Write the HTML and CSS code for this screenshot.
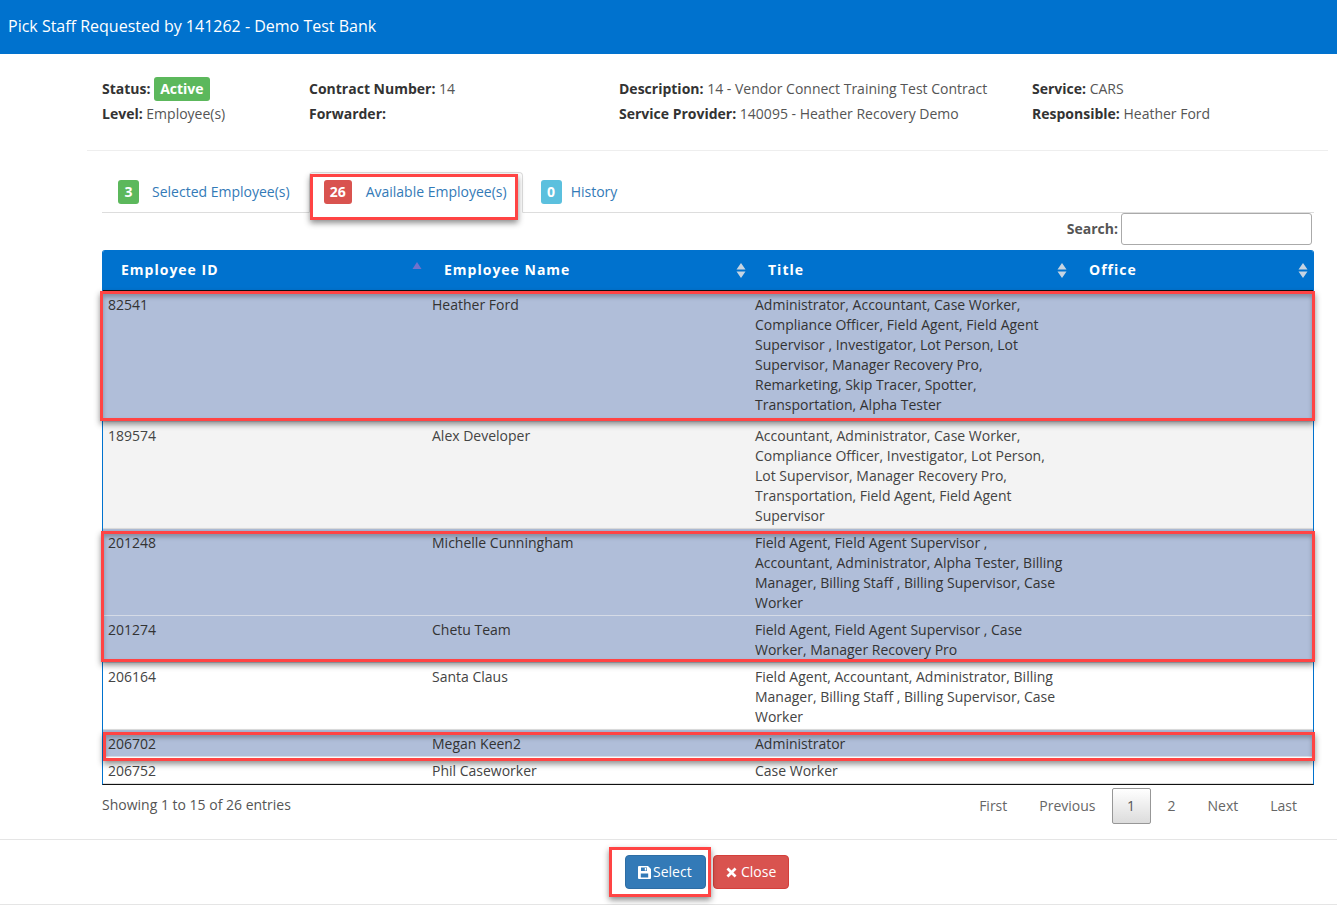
FILE: index.html
```html
<!DOCTYPE html>
<html lang="en">
<head>
<meta charset="utf-8">
<title>Pick Staff</title>
<link rel="stylesheet" href="styles.css">
</head>
<body>
<header class="topbar">Pick Staff Requested by 141262 - Demo Test Bank</header>
<main class="content">
  <section class="summary">
    <div><b>Status:</b> <span class="label label-active">Active</span></div>
    <div><b>Contract Number:</b> 14</div>
    <div><b>Description:</b> 14 - Vendor Connect Training Test Contract</div>
    <div><b>Service:</b> CARS</div>
    <div><b>Level:</b> Employee(s)</div>
    <div><b>Forwarder:</b></div>
    <div><b>Service Provider:</b> 140095 - Heather Recovery Demo</div>
    <div><b>Responsible:</b> Heather Ford</div>
  </section>
  <section class="panel">
    <nav class="tabs">
      <a class="tab tab-selected"><span class="badge badge-green">3</span>Selected Employee(s)</a>
      <a class="tab tab-active"><span class="badge badge-red">26</span>Available Employee(s)<span class="mark mark-tab"></span></a>
      <a class="tab tab-history"><span class="badge badge-blue">0</span>History</a>
    </nav>
    <div class="search"><label for="q">Search:</label><input id="q" type="text"></div>
    <div class="table-area">
      <div class="table-clip">
        <table class="grid">
          <colgroup><col class="c1"><col class="c2"><col class="c3"><col class="c4"></colgroup>
          <thead>
            <tr>
              <th><div class="th-in">Employee ID<svg class="sort sort-up" width="10" height="15" viewBox="0 0 10 15"><path class="sort-on" d="M5 0 9.500 7H.5z"/></svg></div></th>
              <th><div class="th-in">Employee Name<svg class="sort" width="10" height="15" viewBox="0 0 10 15"><path class="sort-off" d="M5 0 9.500 6.500H.5zM5 15 .5 8.500h9z"/></svg></div></th>
              <th><div class="th-in">Title<svg class="sort" width="10" height="15" viewBox="0 0 10 15"><path class="sort-off" d="M5 0 9.500 6.500H.5zM5 15 .5 8.500h9z"/></svg></div></th>
              <th><div class="th-in">Office<svg class="sort" width="10" height="15" viewBox="0 0 10 15"><path class="sort-off" d="M5 0 9.500 6.500H.5zM5 15 .5 8.500h9z"/></svg></div></th>
            </tr>
          </thead>
          <tbody>
            <tr class="sel first"><td>82541</td><td>Heather Ford</td><td>Administrator, Accountant, Case Worker, Compliance Officer, Field Agent, Field Agent Supervisor , Investigator, Lot Person, Lot Supervisor, Manager Recovery Pro, Remarketing, Skip Tracer, Spotter, Transportation, Alpha Tester</td><td></td></tr>
            <tr class="odd"><td>189574</td><td>Alex Developer</td><td>Accountant, Administrator, Case Worker, Compliance Officer, Investigator, Lot Person, Lot Supervisor, Manager Recovery Pro, Transportation, Field Agent, Field Agent Supervisor</td><td></td></tr>
            <tr class="sel"><td>201248</td><td>Michelle Cunningham</td><td>Field Agent, Field Agent Supervisor , Accountant, Administrator, Alpha Tester, Billing Manager, Billing Staff , Billing Supervisor, Case Worker</td><td></td></tr>
            <tr class="sel"><td>201274</td><td>Chetu Team</td><td>Field Agent, Field Agent Supervisor , Case Worker, Manager Recovery Pro</td><td></td></tr>
            <tr><td>206164</td><td>Santa Claus</td><td>Field Agent, Accountant, Administrator, Billing Manager, Billing Staff , Billing Supervisor, Case Worker</td><td></td></tr>
            <tr class="sel"><td>206702</td><td>Megan Keen2</td><td>Administrator</td><td></td></tr>
            <tr><td>206752</td><td>Phil Caseworker</td><td>Case Worker</td><td></td></tr>
          </tbody>
        </table>
      </div>
      <span class="mark mark-r1"></span>
      <span class="mark mark-r2"></span>
      <span class="mark mark-r3"></span>
    </div>
    <div class="table-foot">
      <div class="info">Showing 1 to 15 of 26 entries</div>
      <div class="pager">
        <a>First</a><a>Previous</a><a class="current">1</a><a>2</a><a>Next</a><a>Last</a>
      </div>
    </div>
  </section>
</main>
<footer class="actions">
  <div class="btn-holder">
    <button class="btn btn-primary" type="button"><svg class="ico" width="13" height="13" viewBox="0 0 13 13"><path fill-rule="evenodd" d="M1 0h9l3 3v9a1 1 0 0 1-1 1H1a1 1 0 0 1-1-1V1a1 1 0 0 1 1-1zM3 1.500V5h6V1.500zM6.800 2H8.300V4.500H6.800zM2.800 7.500V11.500H10.200V7.500z"/></svg>Select</button>
    <span class="mark mark-btn"></span>
  </div>
  <button class="btn btn-danger" type="button"><svg class="ico" width="11" height="11" viewBox="0 0 11 11"><path d="M2.400.5 5.500 3.600 8.600.5 10.500 2.400 7.400 5.500 10.500 8.600 8.600 10.500 5.500 7.400 2.400 10.500.5 8.600 3.600 5.500.5 2.400z"/></svg>Close</button>
</footer>
</body>
</html>
```
FILE: styles.css
```css
* { box-sizing: border-box; }
html, body { margin: 0; height: 905px; overflow: hidden; }
body { font-family: "Open Sans", sans-serif; font-size: 14px; line-height: 20px; color: #333; background: #fff; }

.topbar { height: 54px; background: #0072ce; color: #fff; font-size: 16px; line-height: 52px; padding-left: 8px; }

.content { margin: 0 9px 0 87px; }
.summary { display: grid; grid-template-columns: 207px 310px 413px 1fr; grid-auto-rows: 25px; align-items: center; padding: 22px 0 24px 15px; border-bottom: 1px solid #eee; height: 97px; color: #555; }
.summary b { color: #333; font-weight: 700; }
.label { display: inline-block; height: 24px; line-height: 24px; padding: 0 6px; border-radius: 3px; color: #fff; font-weight: 700; vertical-align: baseline; }
.label-active { background: #5cb85c; }

.panel { padding: 21px 14px 0 15px; }
.tabs { display: flex; height: 41px; border-bottom: 1px solid #ddd; }
.tab { position: relative; display: flex; align-items: center; height: 41px; padding: 0 16px 2px; color: #337ab7; margin-right: 2px; border: 1px solid transparent; border-radius: 4px 4px 0 0; }
.tab-selected { padding-left: 15px; }
.tab-selected .badge { margin-right: 13px; }
.tab-active { border-color: #ddd; border-bottom-color: #fff; padding: 0 15px 2px 14px; background: #fff; }
.tab-active .badge { margin-right: 14px; }
.tab-history { padding-left: 15px; }
.tab-history .badge { margin-right: 9px; }
.badge { display: inline-block; min-width: 21px; height: 24px; line-height: 24px; text-align: center; padding: 0 6px; border-radius: 3px; color: #fff; font-weight: 700; }
.badge-green { background: #5cb85c; }
.badge-red { background: #d9534f; width: 28px; }
.badge-blue { background: #5bc0de; }

.search { display: flex; justify-content: flex-end; align-items: center; height: 32px; padding-right: 2px; margin-bottom: 5px; color: #555; font-weight: 700; }
.search label { margin-right: 3px; }
.search input { width: 191px; height: 32px; border: 1px solid #aaa; border-radius: 3px; background: #fff; padding: 0 6px; }

.table-area { position: relative; }
.table-clip { height: 535px; overflow: hidden; border-left: 1px solid #0072ce; border-right: 1px solid #0072ce; border-bottom: 1px solid #111; border-radius: 3px 3px 0 0; }
.grid { width: 1210px; table-layout: fixed; border-collapse: separate; border-spacing: 0; }
.c1 { width: 324px; } .c2 { width: 323px; } .c3 { width: 321px; } .c4 { width: 242px; }
.grid th { height: 41px; padding: 0; background: #0072ce; color: #fff; border-bottom: 1px solid #111; font-weight: 700; letter-spacing: 1px; text-align: left; }
.th-in { display: flex; justify-content: space-between; align-items: center; padding: 0 4px 0 18px; }
th:nth-child(2) .th-in { padding-left: 17px; }
th:first-child .th-in, th:last-child .th-in { padding-right: 5px; }
.sort-off { fill: #c6d4e2; }
.sort-on { fill: #7272cc; }
.sort { flex: none; }
.sort-up { margin-top: -2px; }
.grid td { vertical-align: top; padding: 4px 6px 2px 5px; border-bottom: 1px solid #ddd; color: #444; }
.grid tr.first td { padding-bottom: 6px; }
.grid tr.sel td { background: #b0bed9; border-bottom-color: #d5dbe6; color: #333; }
.grid tr.odd td { background: #f3f3f3; }

.mark { position: absolute; border: 3px solid #ff4444; box-shadow: 0 3px 6px rgba(0,0,0,.45), inset 0 3px 4px rgba(0,0,0,.25); pointer-events: none; }
.mark-tab { left: 0; top: 1px; width: 208px; height: 46px; box-shadow: 0 3px 6px rgba(0,0,0,.45); }
.mark-r1 { left: -2px; top: 41px; width: 1215px; height: 130px; }
.mark-r2 { left: -1px; top: 281px; width: 1214px; height: 131px; }
.mark-r3 { left: 1px; top: 482px; width: 1212px; height: 29px; }
.mark-btn { left: -16px; top: -8px; width: 102px; height: 50px; box-shadow: 0 3px 6px rgba(0,0,0,.45); }

.table-foot { display: flex; justify-content: space-between; }
.info { padding-top: 10px; color: #555; }
.pager { display: flex; padding: 3px 2px 0 0; }
.pager a { height: 36px; line-height: 34px; padding: 0 14px; margin-left: 2px; color: #666; border: 1px solid transparent; border-radius: 2px; }
.pager a.current { width: 39px; padding: 0; margin: 0 0 0 1px; text-align: center; color: #555; border-color: #979797; background: linear-gradient(#fff, #dcdcdc); }

.actions { position: absolute; left: 0; right: 0; top: 839px; height: 66px; display: flex; justify-content: center; align-items: center; gap: 7px; padding-left: 77px; border-top: 1px solid #e5e5e5; border-bottom: 1px solid #e5e5e5; }
.btn-holder { position: relative; display: flex; }
.btn { display: flex; align-items: center; height: 34px; padding: 0 12px; font: 14px/20px "Open Sans", sans-serif; color: #fff; border: 1px solid; border-radius: 4px; }
.btn-primary { background: #337ab7; border-color: #2e6da4; width: 81px; }
.btn-danger { background: #d9534f; border-color: #d43f3a; width: 76px; }
.ico { fill: #fff; margin-right: 2px; flex: none; }
.btn-danger .ico { margin-right: 4px; }
```
